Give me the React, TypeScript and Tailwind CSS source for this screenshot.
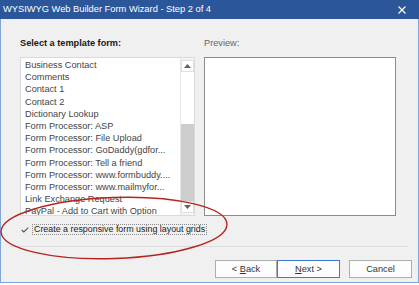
import React from "react";

const items = [
  "Business Contact",
  "Comments",
  "Contact 1",
  "Contact 2",
  "Dictionary Lookup",
  "Form Processor: ASP",
  "Form Processor: File Upload",
  "Form Processor: GoDaddy(gdfor...",
  "Form Processor: Tell a friend",
  "Form Processor: www.formbuddy....",
  "Form Processor: www.mailmyfor...",
  "Link Exchange Request",
  "PayPal - Add to Cart with Option",
];

export default function App() {
  return (
    <div
      className="relative w-[419px] h-[285px] overflow-hidden bg-white text-[9.2px] leading-[12.2px]"
      style={{ fontFamily: '"Liberation Sans", Arial, sans-serif' }}
    >
      <div className="flex h-[283px] w-[419px] flex-col">
        {/* title bar */}
        <div className="flex h-[19px] items-center justify-between bg-[#2b579a] pl-[3px] pr-[13px] text-white">
          <span className="text-[9.3px]">WYSIWYG Web Builder Form Wizard - Step 2 of 4</span>
          <svg width="8" height="8" viewBox="0 0 8 8">
            <path d="M0.5 0.5 L7.5 7.5 M7.5 0.5 L0.5 7.5" stroke="white" strokeWidth="1.2" />
          </svg>
        </div>
        {/* body */}
        <div className="flex flex-1 flex-col border-x border-b border-[#7fa7dc] bg-[#f0f0f0]">
          <div className="flex gap-[9px] pl-[19px] pt-[18px]">
            <div className="flex w-[175px] flex-col">
              <div className="h-[13px] font-bold text-[#1a1a1a]">Select a template form:</div>
              <div className="mt-[7px] flex h-[159px] border border-[#dadada] bg-white">
                <div className="flex-1 overflow-hidden pl-[4px] pt-[1px] text-[#444]">
                  {items.map((t) => (
                    <div key={t} className="h-[12.2px] whitespace-nowrap">
                      {t}
                    </div>
                  ))}
                </div>
                <div className="flex w-[14px] flex-col border-l border-[#e6e6e6] bg-[#f4f4f4]">
                  <div className="mt-[2px] flex h-[12px] items-center justify-center border border-[#e0e0e0] bg-white">
                    <svg width="7" height="4" viewBox="0 0 7 4">
                      <path d="M0 4 L3.5 0 L7 4 Z" fill="#606060" />
                    </svg>
                  </div>
                  <div className="h-[52px] bg-white" />
                  <div className="h-[77px] bg-[#cdcdcd]" />
                  <div className="flex h-[12px] items-center justify-center border border-[#e0e0e0] bg-white">
                    <svg width="7" height="4" viewBox="0 0 7 4">
                      <path d="M0 0 L3.5 4 L7 0 Z" fill="#606060" />
                    </svg>
                  </div>
                </div>
              </div>
            </div>
            <div className="flex w-[192px] flex-col">
              <div className="h-[13px] text-[#666]">Preview:</div>
              <div className="mt-[7px] h-[159px] border border-[#8c8c8c] bg-white" />
            </div>
          </div>
          {/* checkbox row */}
          <div className="mt-[8px] flex items-center pl-[20px]">
            <svg width="8" height="6" viewBox="0 0 8 6" className="mr-[3px]">
              <path d="M0.7 3 L2.8 5 L7.3 0.7" stroke="#555" strokeWidth="1.1" fill="none" />
            </svg>
            <div className="flex h-[11px] items-center border border-dotted border-[#8a8a8a] px-[1px] text-[8.9px] text-[#1a1a1a]">
              Create a responsive form using layout grids
            </div>
          </div>
          {/* separator */}
          <div className="ml-[9px] mr-[10px] mt-[11px] h-px bg-[#dcdcdc]" />
          {/* buttons */}
          <div className="mt-[13px] flex pl-[214px] text-[#333]">
            <div className="flex h-[18px] w-[62px] items-center justify-center border border-[#adadad] bg-[#fdfdfd]">
              &lt;&nbsp;<span className="underline">B</span>ack
            </div>
            <div className="flex h-[18px] w-[63px] items-center justify-center border border-[#3d7bd1] bg-[#fdfdfd]">
              <span className="underline">N</span>ext &gt;
            </div>
            <div className="ml-[9px] flex h-[18px] w-[63px] items-center justify-center border border-[#adadad] bg-[#fdfdfd]">
              Cancel
            </div>
          </div>
        </div>
      </div>
      {/* red annotation ellipse */}
      <svg className="pointer-events-none absolute left-0 top-0" width="419" height="285">
        <ellipse
          cx="114"
          cy="228"
          rx="113"
          ry="30.5"
          fill="none"
          stroke="#b3261e"
          strokeWidth="1.4"
          transform="rotate(-2 114 228)"
        />
      </svg>
    </div>
  );
}
